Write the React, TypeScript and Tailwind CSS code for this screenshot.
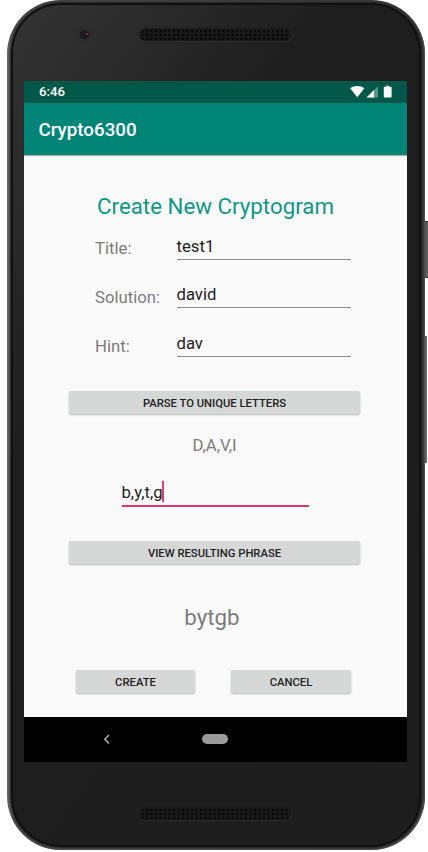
import type { ReactNode } from "react";

function Speaker({ id }: { id: string }) {
  return (
    <svg width="154" height="14" viewBox="0 0 154 14" className="block">
      <defs>
        <pattern id={id} width="4.5" height="4" patternUnits="userSpaceOnUse" patternTransform="translate(1.5 1)">
          <circle cx="2" cy="2" r="1.15" fill="#050505" />
        </pattern>
      </defs>
      <rect x="0.8" y="0.8" width="152.7" height="12.6" rx="6.3" fill="#343434" />
      <rect x="0.3" y="0.3" width="152.7" height="12.6" rx="6.3" fill="#191919" />
      <rect x="3" y="1" width="148" height="12" fill={`url(#${id})`} />
    </svg>
  );
}

function Field({ label, value, labelPad, height }: { label: string; value: string; labelPad: string; height: string }) {
  return (
    <div className={`flex ${height}`}>
      <div className={`w-[81.5px] text-[16.7px] leading-5 text-[#7c7c7c] ${labelPad}`}>{label}</div>
      <div className="h-[24px] w-[174.5px] border-b border-[#8d8d8d] text-[16.7px] leading-[21px] text-[#222]">{value}</div>
    </div>
  );
}

function Button({ children, className }: { children: ReactNode; className: string }) {
  return (
    <button
      className={`flex h-[23px] items-center justify-center rounded-[2px] bg-[#d6d8d7] pt-[2px] text-[11.25px] font-medium leading-none text-[#222] shadow-[0_1px_2px_rgba(0,0,0,0.28)] ${className}`}
    >
      {children}
    </button>
  );
}

export default function App() {
  return (
    <div className="relative h-[852px] w-[428px] overflow-hidden bg-white pl-[7px] font-[Roboto,sans-serif]">
      <div className="absolute left-[424px] top-[221px] h-[57px] w-[4px] border-y border-[#333] bg-linear-to-r from-[#444] to-[#686868]" />
      <div className="absolute left-[424px] top-[336px] h-[127px] w-[3px] bg-linear-to-r from-[#444] to-[#777]" />
      <div className="relative h-[850px] w-[418px] rounded-[54px] bg-linear-to-r from-[#666] via-[#4a4a4a] via-2% to-[#3a3637] px-[4px] py-[3px] shadow-[inset_-1px_-1px_1px_#555]">
        <div className="h-full rounded-[50px] border-2 border-[#101010] bg-[linear-gradient(125deg,#343434_0%,#2b2b2b_13%,#1e1e1e_32%,#1d1d1e_100%)] shadow-[0_0_2px_1px_#222]">
          <div className="flex h-[76px] pl-[63px] pt-[21px]">
            <div className="mt-[-0.5px] flex size-[17px] items-center justify-center rounded-full bg-[#2c2c2c]">
              <div className="flex size-[9px] items-center justify-end rounded-full bg-[#1c1a1f] pr-px">
                <div className="size-[2px] rounded-full bg-[#7d4248]" />
              </div>
            </div>
            <div className="ml-[46px] mt-[2px]">
              <Speaker id="top-mesh" />
            </div>
          </div>

          <div className="ml-[11px] w-[383px] bg-[#fafafa]">
            <div className="flex h-[22px] items-center bg-[#015849] pl-[15px] text-white">
              <span className="text-[13.2px] font-medium leading-[22px]">6:46</span>
              <svg width="44" height="14" viewBox="0 0 44 14" className="ml-auto mr-[14px] block">
                <path d="M1.2 3.2C5.2.1 11.4.1 15.4 3.2L8.3 12.3Z" fill="#fff" />
                <path d="M17.5 12.4 29 1.2v11.2Z" fill="#58968c" />
                <path d="M17.5 12.4 25 5.1v7.3Z" fill="#fff" />
                <path d="M37.2.8h2.9v1h1.7q.8 0 .8.8v9q0 .9-.9.9h-6q-.9 0-.9-.9v-9q0-.8.8-.8h1.6Z" fill="#fff" />
              </svg>
            </div>
            <header className="flex h-[52px] items-center bg-[#018577] pl-[14.5px] pt-[3px] text-[18.8px] font-medium text-white shadow-[0_1px_1px_rgba(0,0,0,0.3)]">
              Crypto6300
            </header>

            <main className="h-[562px] pt-[38px]">
              <h1 className="h-[43px] text-center text-[22.3px] font-normal leading-[27px] text-[#0f9788]">Create New Cryptogram</h1>
              <div className="pl-[71px]">
                <Field label="Title:" value="test1" labelPad="pt-[3px]" height="h-[48px]" />
                <Field label="Solution:" value="david" labelPad="pt-[4px]" height="h-[49px]" />
                <Field label="Hint:" value="dav" labelPad="pt-[4px]" height="h-[58px]" />
              </div>
              <Button className="ml-[45px] w-[291px]">PARSE TO UNIQUE LETTERS</Button>
              <p className="mt-[21px] pr-[2px] text-center text-[16.7px] leading-[22px] text-[#7c7c7c]">D,A,V,I</p>
              <div className="ml-[97.5px] mt-[24px] flex h-[26px] w-[187.5px] border-b-2 border-[#df3471] text-[16.7px] leading-[23px] text-[#222]">
                <span>b,y,t,g</span>
                <span className="-ml-px h-[21px] w-[2px] bg-[#e03c78]" />
              </div>
              <Button className="ml-[45px] mt-[34px] w-[291px]">VIEW RESULTING PHRASE</Button>
              <p className="mt-[40px] pr-[7px] text-center text-[22.3px] leading-[27px] text-[#7c7c7c]">bytgb</p>
              <div className="mt-[39px] flex gap-[36px] pl-[52px]">
                <Button className="w-[119px]">CREATE</Button>
                <Button className="w-[120px]">CANCEL</Button>
              </div>
            </main>

            <nav className="flex h-[45px] bg-black pl-[79px] pt-[17px]">
              <svg width="8" height="10" viewBox="0 0 8 10" className="block">
                <path d="M6 1 1.8 5.2 6 9.4" fill="none" stroke="#aaa" strokeWidth="1.5" />
              </svg>
              <div className="ml-[91px] h-[10px] w-[26px] rounded-full bg-[#9b9b9b]" />
            </nav>
          </div>
          <div className="pl-[126px] pt-[45px]">
            <Speaker id="bottom-mesh" />
          </div>
        </div>
      </div>
    </div>
  );
}
